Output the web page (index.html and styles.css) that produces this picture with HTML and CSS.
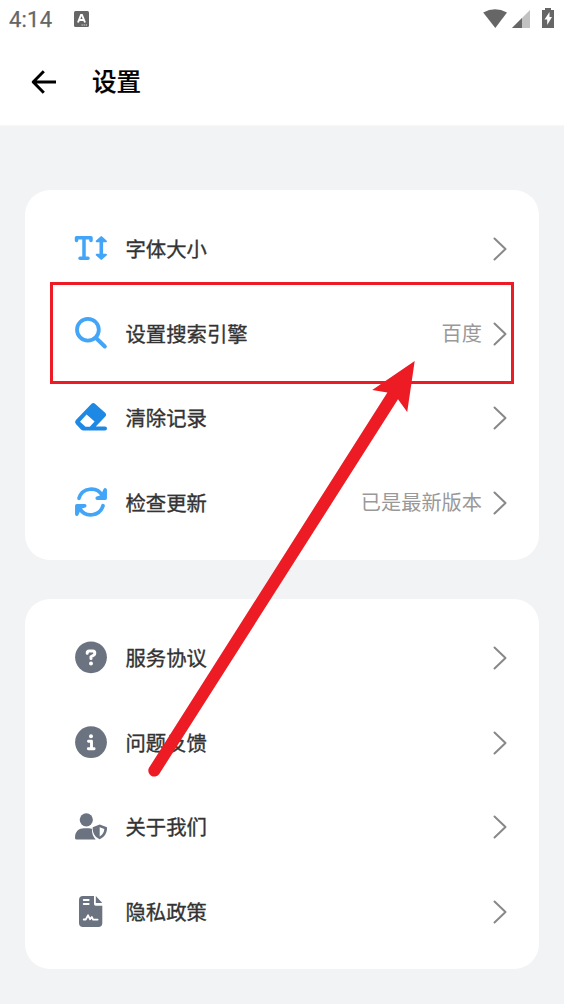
FILE: index.html
```html
<!DOCTYPE html>
<html lang="zh-CN">
<head>
<meta charset="utf-8">
<title>设置</title>
<link rel="stylesheet" href="styles.css">
</head>
<body>
<div class="screen">
  <header class="top">
    <div class="status">
      <span class="clock">4:14</span>
      <svg class="keyboard" width="15" height="16" viewBox="0 0 15 16"><rect width="15" height="16" rx="1.5" fill="#666"/><path d="M4 11.500 7 4h1l3 7.500M5 9h5" fill="none" stroke="#fff" stroke-width="1.900"/><path d="M7.500 14h6" stroke="#ddd" stroke-width="1" stroke-dasharray="1.300 .8"/></svg>
      <svg class="signals" width="74" height="22" viewBox="0 0 74 22" fill="#666"><path d="M3.200 4.500Q15 -2 27 4.500L15.300 20Z"/><path d="M32 20 50 2v18Z" fill="#c2c2c2"/><path d="M32 20 42 10v10Z"/><path d="M65 0h6v2h3v18H62V2h3Z"/><path d="m69.500 4-5 7.500h2.700v5.500l4.800-8h-2.500Z" fill="#fff"/></svg>
    </div>
    <div class="bar">
      <svg class="back" width="26" height="26" viewBox="0 0 26 26"><path d="M12.800 2.300 2.200 13l10.600 10.700M2.200 13H25" fill="none" stroke="#000" stroke-width="3" stroke-linejoin="round"/></svg>
      <h1 class="title">设置</h1>
    </div>
  </header>
  <main class="content">
    <section class="card">
      <div class="row">
        <svg class="icon blue" viewBox="0 0 32 32"><path d="M1.500 8.500V5.700H16v2.800M9 6v20.300M5 26.300h8" fill="none" stroke="currentColor" stroke-width="3.500" stroke-linecap="round" stroke-linejoin="round"/><path d="M26.300 6v20" stroke="currentColor" stroke-width="3.600"/><path d="m26.300 5.200 4.500 4h-9ZM26.300 26.800l4.500-4h-9Z" fill="currentColor" stroke="currentColor" stroke-width="2.200" stroke-linejoin="round"/></svg>
        <span class="label">字体大小</span><svg class="chevron" viewBox="0 0 14 24"><path d="m1.500 1.500 11 10.500-11 10.500"/></svg>
      </div>
      <div class="row">
        <svg class="icon blue" viewBox="0 0 32 32"><circle cx="12.900" cy="12.700" r="10.900" fill="none" stroke="currentColor" stroke-width="3.800"/><path d="m21 21 8.800 8.500" stroke="currentColor" stroke-width="4" stroke-linecap="round"/></svg>
        <span class="label">设置搜索引擎</span><span class="value">百度</span><svg class="chevron" viewBox="0 0 14 24"><path d="m1.500 1.500 11 10.500-11 10.500"/></svg>
      </div>
      <div class="row">
        <svg class="icon deep" viewBox="0 0 32 32"><path fill="currentColor" fill-rule="evenodd" d="M16.300 3q2-1.800 4 0l9.800 8.800q2 2 0 4L20.800 25.600H30a2 2 0 0 1 0 4H8.500q-1.500 0-2.500-1L.9 23q-1.800-2 0-4ZM5 20.800l5.500 5h4.300l4.800-5.200-8-7.200Z"/></svg>
        <span class="label">清除记录</span><svg class="chevron" viewBox="0 0 14 24"><path d="m1.500 1.500 11 10.500-11 10.500"/></svg>
      </div>
      <div class="row">
        <svg class="icon blue" viewBox="0 0 32 32"><g id="sync-arm"><path d="M4 12.300A12.800 12.800 0 0 1 27.300 9.500" fill="none" stroke="currentColor" stroke-width="3.700" stroke-linecap="round"/><path d="M30.200 3.800v8.400H22.200l4.800-1.500Z" fill="currentColor" stroke="currentColor" stroke-width="3.500" stroke-linecap="round" stroke-linejoin="round"/></g><use href="#sync-arm" transform="rotate(180 16 16)"/></svg>
        <span class="label">检查更新</span><span class="value">已是最新版本</span><svg class="chevron" viewBox="0 0 14 24"><path d="m1.500 1.500 11 10.500-11 10.500"/></svg>
      </div>
    </section>
    <section class="card">
      <div class="row">
        <svg class="icon slate" viewBox="0 0 32 32"><circle cx="16" cy="16.300" r="15.900" fill="currentColor"/><path d="M12.200 12.300v-.3Q12.200 10 14.200 10h3.600q2 0 2 2.200 0 1.300-1.200 2L16 15.800v1.700" fill="none" stroke="#fff" stroke-width="3" stroke-linecap="round" stroke-linejoin="round"/><circle cx="16" cy="22.400" r="2" fill="#fff"/></svg>
        <span class="label">服务协议</span><svg class="chevron" viewBox="0 0 14 24"><path d="m1.500 1.500 11 10.500-11 10.500"/></svg>
      </div>
      <div class="row">
        <svg class="icon slate" viewBox="0 0 32 32"><circle cx="16" cy="16.200" r="15.900" fill="currentColor"/><circle cx="16" cy="10.300" r="2" fill="#fff"/><path d="M13.500 15.200H16.500v7.500M13.300 22.700h5.800" fill="none" stroke="#fff" stroke-width="2.900" stroke-linecap="round" stroke-linejoin="round"/></svg>
        <span class="label">问题反馈</span><svg class="chevron" viewBox="0 0 14 24"><path d="m1.500 1.500 11 10.500-11 10.500"/></svg>
      </div>
      <div class="row">
        <svg class="icon slate" viewBox="0 0 32 32" fill="currentColor"><circle cx="11.300" cy="9.800" r="6.600"/><path d="M0 28C0 21.300 4 18.300 9 18.300h5q1.600 0 2.900.5-.2 6.500 3.800 10.700H1.700Q0 29.500 0 28Z"/><path fill-rule="evenodd" d="M24.700 14.500 32 17.300C32.400 22.500 29.500 27.300 24.700 29.300 20 27.300 17.200 22.500 17.700 17.300ZM24.700 17.300v9.200c2.900-1.500 4.500-4.300 4.600-7.400Z"/></svg>
        <span class="label">关于我们</span><svg class="chevron" viewBox="0 0 14 24"><path d="m1.500 1.500 11 10.500-11 10.500"/></svg>
      </div>
      <div class="row">
        <svg class="icon slate" viewBox="0 0 32 32"><path fill="currentColor" d="M8 1h11v8q0 1.700 1.700 1.700H27.300V28q0 4-4 4H8q-4 0-4-4V5q0-4 4-4Z"/><path fill="currentColor" d="m20.800 1 6.500 7H20.800Z"/><path d="M8.700 5h5M8.700 9h5M8.700 24.500h2l2.400-4.200 2 4 1.700-2.300 1.300 2.600h4.500" fill="none" stroke="#fff" stroke-width="1.800" stroke-linecap="round" stroke-linejoin="round"/></svg>
        <span class="label">隐私政策</span><svg class="chevron" viewBox="0 0 14 24"><path d="m1.500 1.500 11 10.500-11 10.500"/></svg>
      </div>
    </section>
  </main>
  <svg class="annotation" viewBox="0 0 564 1004"><rect x="51.500" y="283.500" width="461" height="99"/><path d="M414.700 361 372.200 390l15.200 2.400L149 767.800a6 6 0 0 0 10.100 6.400L398 399.300l9.200 12.700Z"/></svg>
</div>
</body>
</html>
```
FILE: styles.css
```css
* { box-sizing: border-box; }
body {
  margin: 0;
  background: #f2f3f5;
  color: #333;
  font-family: "Noto Sans CJK SC", sans-serif;
}
.screen { position: relative; width: 564px; height: 1004px; overflow: hidden; }
.top { height: 125px; background: #fff; box-shadow: 0 1px 1px #f7f7f8; }
.status { display: flex; height: 38px; padding: 8px 10px 0 9px; align-items: flex-start; }
.clock { width: 65px; font: 400 22px/24px Roboto, sans-serif; color: #666; letter-spacing: .2px; -webkit-text-stroke: .25px #666; }
.keyboard { margin-top: 3px; }
.signals { margin-left: auto; }
.bar { display: flex; align-items: center; height: 87px; padding: 0 0 0 31px; }
.back { margin-right: 35px; }
.title { margin: 0; padding-bottom: 1px; font-size: 24.500px; line-height: 36px; font-weight: 500; color: #000; -webkit-text-stroke: .2px #000; }
.content { display: flex; flex-direction: column; gap: 39px; padding: 65px 25px 0; }
.card { height: 370px; padding: 15.500px 32px 15.500px 50px; background: #fff; border-radius: 25px; }
.row { display: flex; align-items: center; height: 84.750px; }
.icon { width: 32px; height: 32px; margin-right: 18.500px; flex: none; overflow: visible; }
.blue { color: #42a5f8; }
.deep { color: #1e88e5; }
.slate { color: #6b7280; }
.label { flex: 1; font-size: 20.350px; line-height: 30px; font-weight: 400; -webkit-text-stroke: .35px #333; }
.value { font-size: 20.200px; line-height: 30px; color: #999; margin-right: 11px; font-weight: 400; }
.chevron { width: 14px; height: 24px; margin-top: 2px; flex: none; fill: none; stroke: #888; stroke-width: 2; stroke-linecap: round; stroke-linejoin: round; }
.annotation { position: absolute; inset: 0; width: 564px; height: 1004px; fill: #ed1c24; pointer-events: none; }
.annotation rect { fill: none; stroke: #ed1c24; stroke-width: 3; }
```
